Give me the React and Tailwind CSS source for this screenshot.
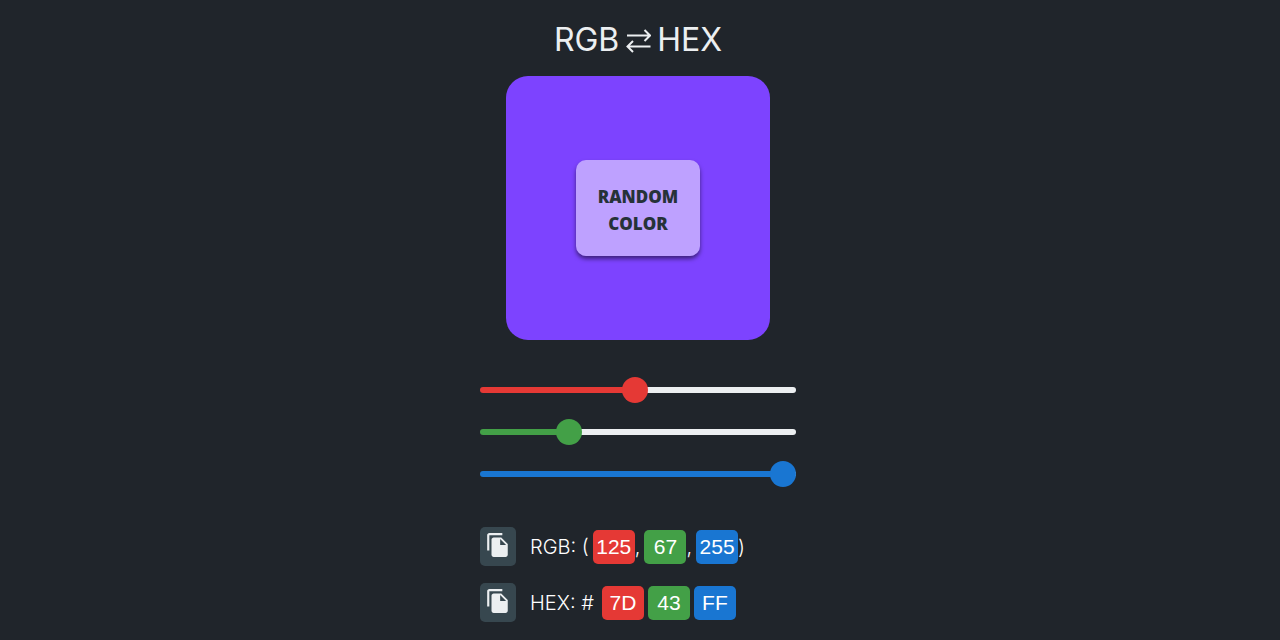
import { useState } from "react";
import { MdFileCopy } from "react-icons/md";

const channels = [
  {
    name: "Red",
    color: "#e53935",
    badge: "bg-[#e53935]",
    thumb: "[&::-webkit-slider-thumb]:bg-[#e53935] [&::-moz-range-thumb]:bg-[#e53935]",
  },
  {
    name: "Green",
    color: "#43a047",
    badge: "bg-[#43a047]",
    thumb: "[&::-webkit-slider-thumb]:bg-[#43a047] [&::-moz-range-thumb]:bg-[#43a047]",
  },
  {
    name: "Blue",
    color: "#1976d2",
    badge: "bg-[#1976d2]",
    thumb: "[&::-webkit-slider-thumb]:bg-[#1976d2] [&::-moz-range-thumb]:bg-[#1976d2]",
  },
];

const toHex = (n) => n.toString(16).padStart(2, "0").toUpperCase();

function SwapArrows() {
  return (
    <svg viewBox="0 0 26 26" className="size-[26px]" fill="none" stroke="currentColor" strokeWidth="2" aria-hidden="true">
      <path d="M2 8.500h22.500M19.500 3l5.500 5.500-5.500 5.500" />
      <path d="M25.500 19.500H3M8 14l-5.500 5.500L8 25" />
    </svg>
  );
}

function ChannelSlider({ channel, value, onChange }) {
  const stop = `calc(13px + (100% - 26px) * ${value / 255})`;
  return (
    <input
      type="range"
      min="0"
      max="255"
      value={value}
      aria-label={channel.name}
      onChange={(e) => onChange(Number(e.target.value))}
      style={{ backgroundImage: `linear-gradient(to right, ${channel.color} ${stop}, #eceff1 ${stop})` }}
      className={`block h-[6px] w-full cursor-pointer appearance-none rounded-full [&::-webkit-slider-thumb]:size-[26px] [&::-webkit-slider-thumb]:appearance-none [&::-webkit-slider-thumb]:rounded-full [&::-moz-range-thumb]:size-[26px] [&::-moz-range-thumb]:rounded-full [&::-moz-range-thumb]:border-0 ${channel.thumb}`}
    />
  );
}

function CopyButton({ label, text }) {
  return (
    <button
      type="button"
      aria-label={label}
      onClick={() => navigator.clipboard?.writeText(text)}
      className="mr-[14px] flex h-[39px] w-9 shrink-0 cursor-pointer items-start justify-center rounded-[5px] bg-[#37474f] pt-[5px] text-[#eceff1]"
    >
      <MdFileCopy size={26} />
    </button>
  );
}

function Value({ channel, children }) {
  return (
    <span className={`flex h-[34px] w-[42px] items-center justify-center rounded-[5px] font-['Liberation_Sans',sans-serif] text-[21px] font-normal ${channel.badge}`}>
      {children}
    </span>
  );
}

export default function App() {
  const [rgb, setRgb] = useState([125, 67, 255]);
  const hex = rgb.map(toHex);
  const setChannel = (i, v) => setRgb(rgb.map((old, j) => (j === i ? v : old)));
  const randomize = () => setRgb(rgb.map(() => Math.floor(Math.random() * 256)));

  return (
    <div className="flex min-h-screen flex-col items-center bg-[#20252b] pt-4 pr-1 font-[Inter,sans-serif] text-[#eceff1]">
      <h1 className="flex items-center gap-[6px] text-[32px] leading-[48px]">
        RGB
        <SwapArrows />
        HEX
      </h1>

      <div
        className="mt-3 flex size-[264px] items-center justify-center rounded-[22px]"
        style={{ backgroundColor: `rgb(${rgb.join(",")})` }}
      >
        <button
          type="button"
          onClick={randomize}
          className="h-24 w-[124px] cursor-pointer rounded-[10px] bg-white/50 px-4 pt-1 font-['Open_Sans',sans-serif] text-[17px] leading-[27px] font-extrabold text-[#263238] shadow-[0_3px_4px_rgba(0,0,0,0.5)]"
        >
          RANDOM COLOR
        </button>
      </div>

      <div className="mt-[47px] flex w-[316px] flex-col gap-9">
        {channels.map((c, i) => (
          <ChannelSlider key={c.name} channel={c} value={rgb[i]} onChange={(v) => setChannel(i, v)} />
        ))}
      </div>

      <div className="mt-[50px] flex w-[316px] flex-col gap-[17px] pb-4 text-xl font-light text-white">
        <div className="flex items-center">
          <CopyButton label="Copy RGB" text={`rgb(${rgb.join(", ")})`} />
          <span className="mr-1">RGB: (</span>
          <Value channel={channels[0]}>{rgb[0]}</Value>
          <span className="mr-1">,</span>
          <Value channel={channels[1]}>{rgb[1]}</Value>
          <span className="mr-1">,</span>
          <Value channel={channels[2]}>{rgb[2]}</Value>
          <span>)</span>
        </div>
        <div className="flex items-center">
          <CopyButton label="Copy HEX" text={`#${hex.join("")}`} />
          <span className="mr-2">HEX: #</span>
          <div className="flex gap-1">
            {channels.map((c, i) => (
              <Value key={c.name} channel={c}>{hex[i]}</Value>
            ))}
          </div>
        </div>
      </div>
    </div>
  );
}
